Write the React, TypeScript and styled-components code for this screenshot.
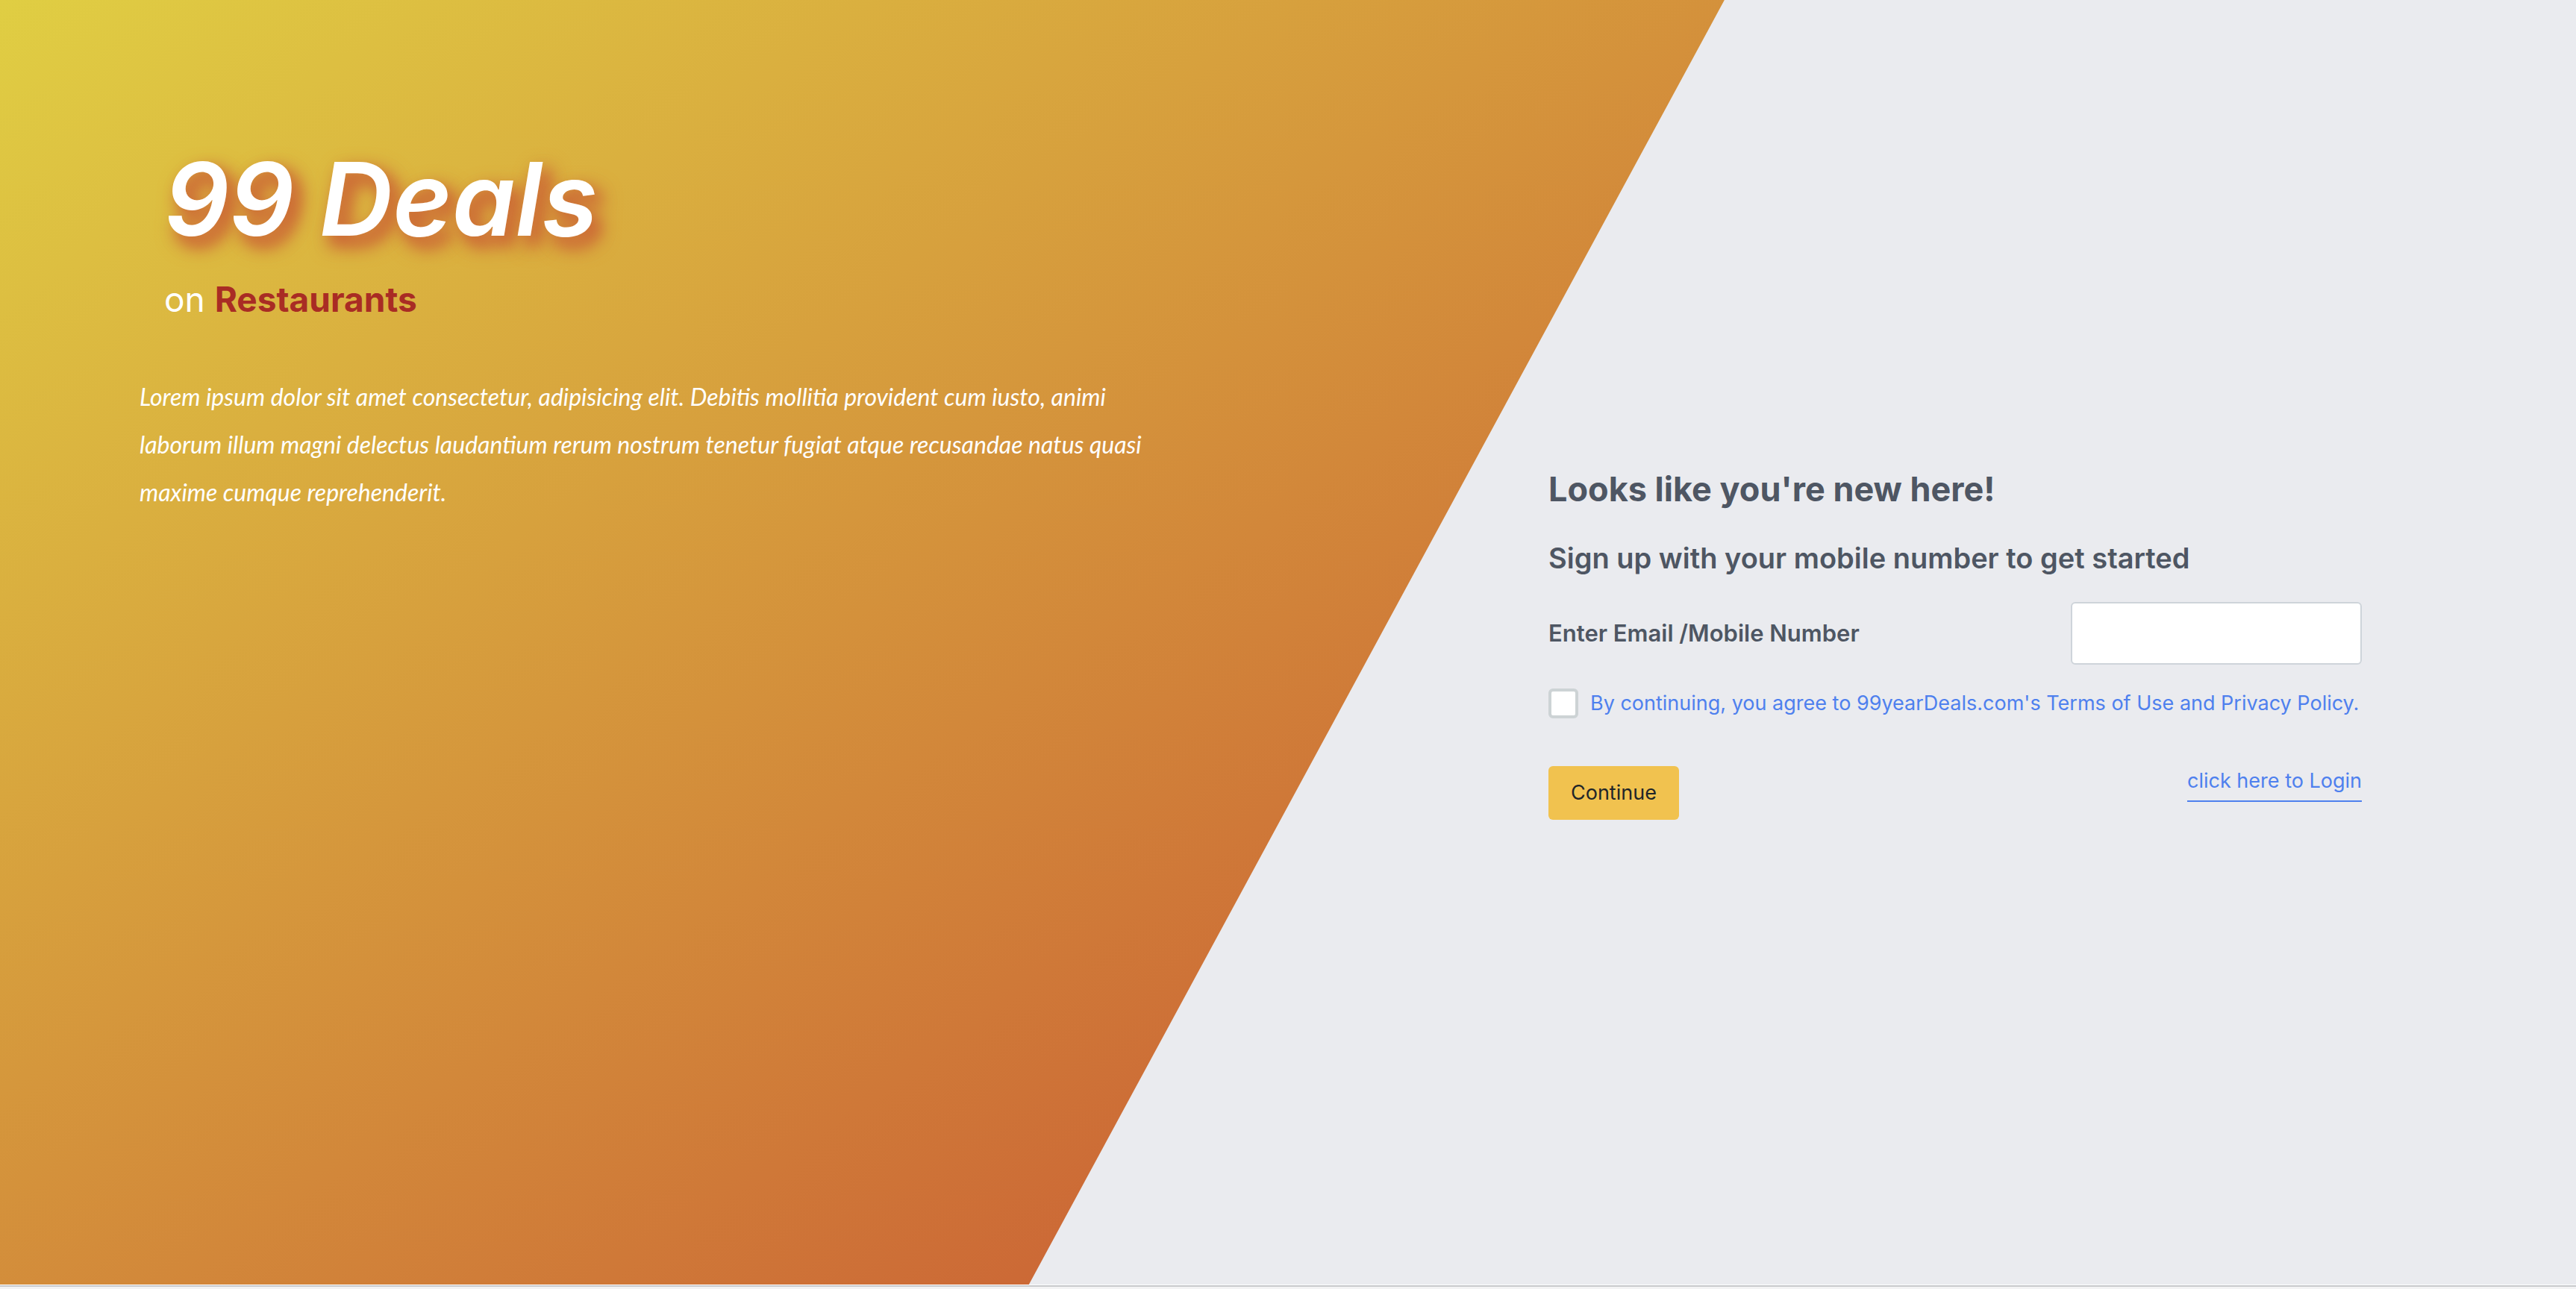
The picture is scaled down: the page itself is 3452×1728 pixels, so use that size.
import React from "react";
import styled, { createGlobalStyle } from "styled-components";

const GlobalStyle = createGlobalStyle`
  *, *::before, *::after { box-sizing: border-box; }
  body {
    margin: 0;
    background: #f3f3f4;
    color: #4e5663;
    font-family: Inter, "Liberation Sans", sans-serif;
    font-size: 27px;
    line-height: 42px;
  }
  h1, h2, h3, p { margin: 0; }
`;

const Page = styled.div`
  min-height: 100vh;
  display: flex;
  flex-direction: column;
`;

const Hero = styled.main`
  flex: 1;
  display: grid;
  grid-template-columns: 50% 1fr;
  background-color: #eaebef;
  position: relative;
  isolation: isolate;

  &::before {
    content: "";
    position: absolute;
    inset: 0;
    z-index: -1;
    background: linear-gradient(145deg, #e0ce43 0%, #cc6936 65%);
    clip-path: polygon(0 0, calc(67% - 2px) 0, calc(40% - 2px) 100%, 0 100%);
  }
`;

const Intro = styled.section`
  padding: 183px 148px 0 187px;
  color: #fff;
`;

const Brand = styled.header`
  padding-left: 33px;
  margin-bottom: 69px;
`;

const Title = styled.h1`
  font-size: 136px;
  line-height: 168px;
  font-weight: 600;
  font-style: italic;
  text-shadow: 10px 12px 20px #cc6936, 10px 12px 28px #cc6936;
  margin-bottom: 20px;
`;

const Tagline = styled.p`
  font-size: 46px;
  line-height: 60px;

  strong {
    color: #a92c24;
    font-weight: 700;
  }
`;

const Blurb = styled.p`
  font-family: Lato, "Open Sans", sans-serif;
  font-style: italic;
  font-size: 32px;
  line-height: 64px;
`;

const SignUp = styled.section`
  display: flex;
  align-items: center;
  justify-content: flex-end;
  padding: 4px 287px 0 0;
`;

const Form = styled.form`
  width: 1090px;
`;

const Heading = styled.h2`
  font-size: 45px;
  line-height: 58px;
  font-weight: 700;
  margin-bottom: 39px;
`;

const SubHeading = styled.h3`
  font-size: 38px;
  line-height: 48px;
  font-weight: 600;
  margin-bottom: 35px;
`;

const Row = styled.div<{ $align?: string; $gap: number }>`
  display: flex;
  justify-content: space-between;
  align-items: ${(p) => p.$align ?? "center"};
  margin-bottom: ${(p) => p.$gap}px;
`;

const FieldLabel = styled.label`
  font-size: 31px;
  line-height: 42px;
  font-weight: 600;
`;

const TextField = styled.input`
  width: 390px;
  height: 84px;
  padding: 12px 24px;
  border: 2px solid #ced4da;
  border-radius: 6px;
  background: #fff;
  font: inherit;
`;

const Agreement = styled.label`
  display: flex;
  align-items: center;
  gap: 16px;
  height: 40px;
  margin-bottom: 64px;
  color: #4e80ee;
  white-space: nowrap;
`;

const Checkbox = styled.input`
  appearance: none;
  flex: none;
  width: 40px;
  height: 40px;
  margin: 0;
  border: 4px solid #cdd3d5;
  border-radius: 6px;
  background: #fff;

  &:checked {
    background: #4e80ee;
  }
`;

const Button = styled.button`
  height: 72px;
  padding: 0 30px;
  border: 0;
  border-radius: 6px;
  background: #f1c24f;
  color: #212529;
  font: inherit;
  cursor: pointer;
`;

const LoginLink = styled.a`
  color: #4e80ee;
  text-decoration: none;
  border-bottom: 2px solid #4e80ee;
  padding-bottom: 6px;
  line-height: 40px;
`;

const Footer = styled.footer`
  height: 6px;
  border-top: 1px solid #fff;

  &::before {
    content: "";
    display: block;
    height: 2px;
    background: #c8c9cc;
  }
`;

export default function App() {
  return (
    <Page>
      <GlobalStyle />
      <Hero>
        <Intro>
          <Brand>
            <Title>99 Deals</Title>
            <Tagline>
              on <strong>Restaurants</strong>
            </Tagline>
          </Brand>
          <Blurb>
            Lorem ipsum dolor sit amet consectetur, adipisicing elit. Debitis mollitia provident cum
            iusto, animi laborum illum magni delectus laudantium rerum nostrum tenetur fugiat atque
            recusandae natus quasi maxime cumque reprehenderit.
          </Blurb>
        </Intro>
        <SignUp>
          <Form onSubmit={(e) => e.preventDefault()}>
            <Heading>Looks like you're new here!</Heading>
            <SubHeading>Sign up with your mobile number to get started</SubHeading>
            <Row $gap={32}>
              <FieldLabel htmlFor="contact">Enter Email /Mobile Number</FieldLabel>
              <TextField id="contact" type="text" />
            </Row>
            <Agreement>
              <Checkbox type="checkbox" />
              By continuing, you agree to 99yearDeals.com's Terms of Use and Privacy Policy.
            </Agreement>
            <Row $gap={0} $align="flex-start">
              <Button type="submit">Continue</Button>
              <LoginLink href="#login">click here to Login</LoginLink>
            </Row>
          </Form>
        </SignUp>
      </Hero>
      <Footer />
    </Page>
  );
}
